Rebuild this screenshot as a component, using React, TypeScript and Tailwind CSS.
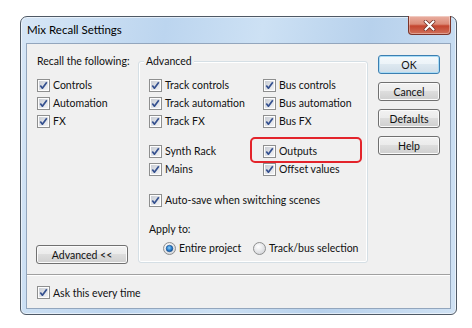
import React from "react";

const Check = () => (
  <svg width="13" height="13" viewBox="0 0 13 13" className="shrink-0">
    <rect x="0.5" y="0.5" width="12" height="12" fill="#fdfdfd" stroke="#8e8f8f" />
    <rect x="2" y="2" width="9" height="9" fill="url(#cbfill)" />
    <path d="M3.3 6.4 L5.4 9.2 L9.8 3.2" fill="none" stroke="#34508f" strokeWidth="1.7" strokeLinejoin="round" />
  </svg>
);

const Radio = ({ on }: { on?: boolean }) => (
  <svg width="13" height="13" viewBox="0 0 13 13" className="shrink-0">
    <circle cx="6.5" cy="6.5" r="6" fill="url(#rbg)" stroke="#8e8f8f" />
    {on && <circle cx="6.5" cy="6.5" r="3.3" fill="url(#rdot)" stroke="#1a4f8a" strokeWidth="0.6" />}
  </svg>
);

const CheckRow = ({ label }: { label: string }) => (
  <div className="flex h-[18px] items-center gap-[3px]">
    <Check />
    <span className="whitespace-nowrap">{label}</span>
  </div>
);

const Btn = ({ label, def }: { label: string; def?: boolean }) => (
  <div
    className={
      def
        ? "flex h-[19px] w-[62px] items-center justify-center rounded-[3px] border border-[#3c7fb1] bg-[linear-gradient(#f4f9fc_0%,#ecf3f8_49%,#dde8f0_50%,#d0dde8_100%)] shadow-[inset_0_0_0_1px_#a9dcf6]"
        : "flex h-[19px] w-[62px] items-center justify-center rounded-[3px] border border-[#707070] bg-[linear-gradient(#f2f2f2_0%,#ebebeb_49%,#dddddd_50%,#cfcfcf_100%)] shadow-[inset_0_0_0_1px_#fbfbfb]"
    }
  >
    {label}
  </div>
);

export default function App() {
  return (
    <div className="h-[328px] w-[472px] bg-white pl-[20px] pt-[16px] font-[family-name:Lato,sans-serif] text-[10.5px] leading-[16px] text-[#111]">
      <svg width="0" height="0" className="absolute">
        <defs>
          <linearGradient id="cbfill" x1="0" y1="0" x2="1" y2="1">
            <stop offset="0" stopColor="#c9cdd4" />
            <stop offset="1" stopColor="#f3f4f6" />
          </linearGradient>
          <radialGradient id="rbg" cx="0.4" cy="0.35" r="0.7">
            <stop offset="0" stopColor="#ffffff" />
            <stop offset="1" stopColor="#d2d4d8" />
          </radialGradient>
          <radialGradient id="rdot" cx="0.45" cy="0.4" r="0.6">
            <stop offset="0" stopColor="#8fd0f5" />
            <stop offset="0.6" stopColor="#2a7fcf" />
            <stop offset="1" stopColor="#0f4f95" />
          </radialGradient>
        </defs>
      </svg>
      <div className="flex h-[299px] w-[437px] flex-col rounded-b-[6px] rounded-t-[7px] border border-[#4f5965] bg-[linear-gradient(100deg,#d6e6f6_0%,#bcd5ef_30%,#cde1f4_50%,#b7d1ec_72%,#d0e2f4_100%)] px-[5px] pb-[5px] shadow-[inset_0_0_0_1px_rgba(255,255,255,0.55)]">
        <div className="flex h-[26px] shrink-0 items-start justify-between">
          <span className="self-center pl-[1px] text-[11.5px] text-black">Mix Recall Settings</span>
          <div className="-mt-[1px] flex h-[19px] w-[43px] items-center justify-center rounded-b-[4px] border border-t-0 border-[#7c3429] bg-[linear-gradient(#eab0a2_0%,#dc8b78_45%,#c4452f_55%,#d0705a_100%)] shadow-[inset_0_0_0_1px_rgba(255,255,255,0.35)]">
            <svg width="13" height="11" viewBox="0 0 13 11">
              <path d="M2.5 1.5 L10.5 9.5 M10.5 1.5 L2.5 9.5" stroke="#6b2a20" strokeWidth="3.6" strokeLinecap="round" />
              <path d="M2.5 1.5 L10.5 9.5 M10.5 1.5 L2.5 9.5" stroke="#ffffff" strokeWidth="2.2" strokeLinecap="round" />
            </svg>
          </div>
        </div>
        <div className="flex flex-1 flex-col border border-[#93a6bd] bg-[#f0f0f0]">
          <div className="flex h-[230px] shrink-0 pb-[10px] pl-[10px] pt-[9px]">
            <div className="flex w-[101px] flex-col">
              <span className="whitespace-nowrap">Recall the following:</span>
              <div className="mt-[7px] flex flex-col">
                <CheckRow label="Controls" />
                <CheckRow label="Automation" />
                <CheckRow label="FX" />
              </div>
              <div className="mt-auto -ml-[1px] w-[92px]">
                <div className="flex h-[19px] w-[92px] items-center justify-center rounded-[3px] border border-[#707070] bg-[linear-gradient(#f2f2f2_0%,#ebebeb_49%,#dddddd_50%,#cfcfcf_100%)] shadow-[inset_0_0_0_1px_#fbfbfb]">
                  Advanced &lt;&lt;
                </div>
              </div>
            </div>
            <div className="relative mt-[8px] h-[202px] w-[230px] rounded-[3px] border border-[#d5dfe5] pl-[10px] pt-[14px] shadow-[inset_0_0_0_1px_#ffffff]">
              <span className="absolute -top-[9px] left-[5px] bg-[#f0f0f0] px-[2px]">Advanced</span>
              <div className="grid grid-cols-[114px_1fr]">
                <CheckRow label="Track controls" />
                <CheckRow label="Bus controls" />
                <CheckRow label="Track automation" />
                <CheckRow label="Bus automation" />
                <CheckRow label="Track FX" />
                <CheckRow label="Bus FX" />
              </div>
              <div className="mt-[12px] grid grid-cols-[114px_1fr]">
                <CheckRow label="Synth Rack" />
                <CheckRow label="Outputs" />
                <CheckRow label="Mains" />
                <CheckRow label="Offset values" />
              </div>
              <div className="mt-[13px]">
                <CheckRow label="Auto-save when switching scenes" />
              </div>
              <div className="mt-[12px]">Apply to:</div>
              <div className="ml-[14px] mt-[2px] flex h-[18px] items-center">
                <div className="flex w-[90px] items-center gap-[3px]">
                  <Radio on />
                  <span className="whitespace-nowrap">Entire project</span>
                </div>
                <div className="flex items-center gap-[3px]">
                  <Radio />
                  <span className="whitespace-nowrap">Track/bus selection</span>
                </div>
              </div>
              <div className="absolute left-[111px] top-[75px] h-[26px] w-[112px] rounded-[5px] border-2 border-[#e3242b]" />
            </div>
            <div className="ml-[10px] mt-[2px] flex flex-col gap-[8px]">
              <Btn label="OK" def />
              <Btn label="Cancel" />
              <Btn label="Defaults" />
              <Btn label="Help" />
            </div>
          </div>
          <div className="h-[2px] shrink-0 border-b border-t border-b-white border-t-[#a0a0a0]" />
          <div className="flex flex-1 items-center pl-[10px] pt-[1px]">
            <CheckRow label="Ask this every time" />
          </div>
        </div>
      </div>
    </div>
  );
}
